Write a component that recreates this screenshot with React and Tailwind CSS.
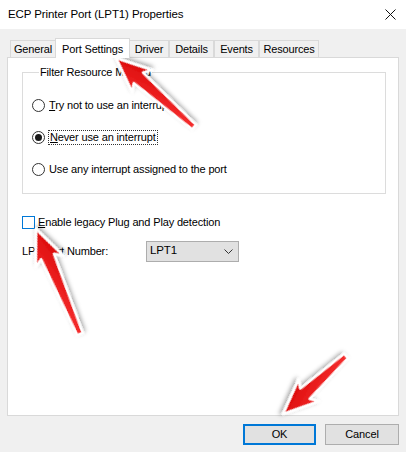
import { useState } from "react";

const TABS = [
  { label: "General", w: "w-[46px]" },
  { label: "Port Settings", w: "w-[75px]", active: true },
  { label: "Driver", w: "w-[40px]" },
  { label: "Details", w: "w-[45px]" },
  { label: "Events", w: "w-[45px]" },
  { label: "Resources", w: "w-[60px]" },
];

const RADIOS = [
  { key: "try", u: "T", rest: "ry not to use an interrupt" },
  { key: "never", u: "N", rest: "ever use an interrupt" },
  { key: "any", u: "", rest: "Use any interrupt assigned to the port" },
];

// red pointer arrow, drawn from tail to tip
function Arrow({ x1, y1, x2, y2 }) {
  const L = Math.hypot(x2 - x1, y2 - y1);
  const a = (Math.atan2(y2 - y1, x2 - x1) * 180) / Math.PI;
  const pts = [
    [0, -3],
    [L - 30, -7],
    [L - 35, -15],
    [L, 0],
    [L - 35, 15],
    [L - 30, 7],
    [0, 3],
  ]
    .map((p) => p.join(","))
    .join(" ");
  return (
    <g transform={`translate(${x1} ${y1}) rotate(${a})`}>
      <polygon points={pts} fill="url(#red)" stroke="#fff" strokeWidth="2.5" strokeLinejoin="round" filter="url(#sh)" />
    </g>
  );
}

export default function App() {
  const [choice, setChoice] = useState("never");

  return (
    <div className="relative w-[406px] h-[452px] overflow-hidden bg-[#f0f0f0] text-black text-[11px] tracking-[-0.15px] font-['Liberation_Sans',Arial,sans-serif]">
      {/* Title bar */}
      <div className="flex h-[29px] items-center justify-between bg-white pl-[8px] pr-[9px]">
        <span className="text-[11.5px] tracking-[-0.1px]">ECP Printer Port (LPT1) Properties</span>
        <svg width="11" height="11" viewBox="0 0 11 11" className="mr-[1px]">
          <path d="M0.5 0.5 L10.5 10.5 M10.5 0.5 L0.5 10.5" stroke="#111" strokeWidth="1" />
        </svg>
      </div>

      <div className="px-[7px] pt-[8px]">
        {/* Tabs */}
        <div className="flex h-[20px] items-end pl-[3px]">
          {TABS.map((t) =>
            t.active ? (
              <div
                key={t.label}
                className={`relative z-10 -mx-[1px] -mb-[1px] flex h-[20px] items-start justify-center border border-b-0 border-[#d9d9d9] bg-white pt-[2px] ${t.w}`}
              >
                {t.label}
              </div>
            ) : (
              <div
                key={t.label}
                className={`flex h-[17px] items-center justify-center border border-b-0 border-[#d9d9d9] bg-[#f0f0f0] ${t.w}`}
              >
                {t.label}
              </div>
            )
          )}
        </div>

        {/* Panel */}
        <div className="h-[359px] border border-[#d9d9d9] bg-white px-[14px] pt-[8px]">
          <fieldset className="h-[128px] w-[364px] border border-[#dcdcdc] pl-[9px] pt-[21px]">
            <legend className="ml-[7px] px-[1px] leading-[12px]">Filter Resource Method</legend>
            <div className="flex flex-col gap-[19px]">
              {RADIOS.map((r) => (
                <label key={r.key} className="flex h-[13px] items-center gap-[4px]" onClick={() => setChoice(r.key)}>
                  <span className="flex h-[13px] w-[13px] items-center justify-center rounded-full border border-[#333] bg-white">
                    {choice === r.key && <span className="h-[7px] w-[7px] rounded-full bg-[#1a1a1a]" />}
                  </span>
                  <span
                    className={
                      r.key === "never"
                        ? "outline outline-1 outline-dotted outline-[#333] px-[1px] leading-[13px]"
                        : "leading-[13px]"
                    }
                  >
                    {r.u && <span className="underline">{r.u}</span>}
                    {r.rest}
                  </span>
                </label>
              ))}
            </div>
          </fieldset>

          <div className="mt-[20px] flex items-center gap-[3px]">
            <span className="h-[13px] w-[13px] border border-[#0078d7] bg-white" />
            <span>
              <span className="underline">E</span>nable legacy Plug and Play detection
            </span>
          </div>

          <div className="mt-[10px] flex items-center">
            <span className="w-[124px]">LPT Port Number:</span>
            <div className="flex h-[21px] w-[93px] items-center justify-between border border-[#adadad] bg-[#e1e1e1] pl-[3px] pr-[5px]">
              <span className="text-[11.5px]">LPT1</span>
              <svg width="9" height="5" viewBox="0 0 9 5">
                <path d="M0.5 0.5 L4.5 4.5 L8.5 0.5" fill="none" stroke="#333" strokeWidth="1" />
              </svg>
            </div>
          </div>
        </div>

        {/* Buttons */}
        <div className="mt-[8px] flex justify-end gap-[9px]">
          <button className="h-[21px] w-[73px] border-2 border-[#0078d7] bg-[#e1e1e1]">OK</button>
          <button className="h-[21px] w-[74px] border border-[#adadad] bg-[#e1e1e1]">Cancel</button>
        </div>
      </div>

      {/* Annotation arrows */}
      <svg className="pointer-events-none absolute inset-0" width="406" height="452" viewBox="0 0 406 452">
        <defs>
          <linearGradient id="red" x1="0" y1="0" x2="1" y2="1">
            <stop offset="0" stopColor="#ff3a3a" />
            <stop offset="1" stopColor="#d40000" />
          </linearGradient>
          <filter id="sh" x="-30%" y="-30%" width="160%" height="160%">
            <feDropShadow dx="1.5" dy="2" stdDeviation="2" floodColor="#000" floodOpacity="0.35" />
          </filter>
        </defs>
        <Arrow x1={194} y1={127} x2={116} y2={58} />
        <Arrow x1={80} y1={334} x2={36} y2={229} />
        <Arrow x1={346} y1={356} x2={283} y2={414} />
      </svg>
    </div>
  );
}
